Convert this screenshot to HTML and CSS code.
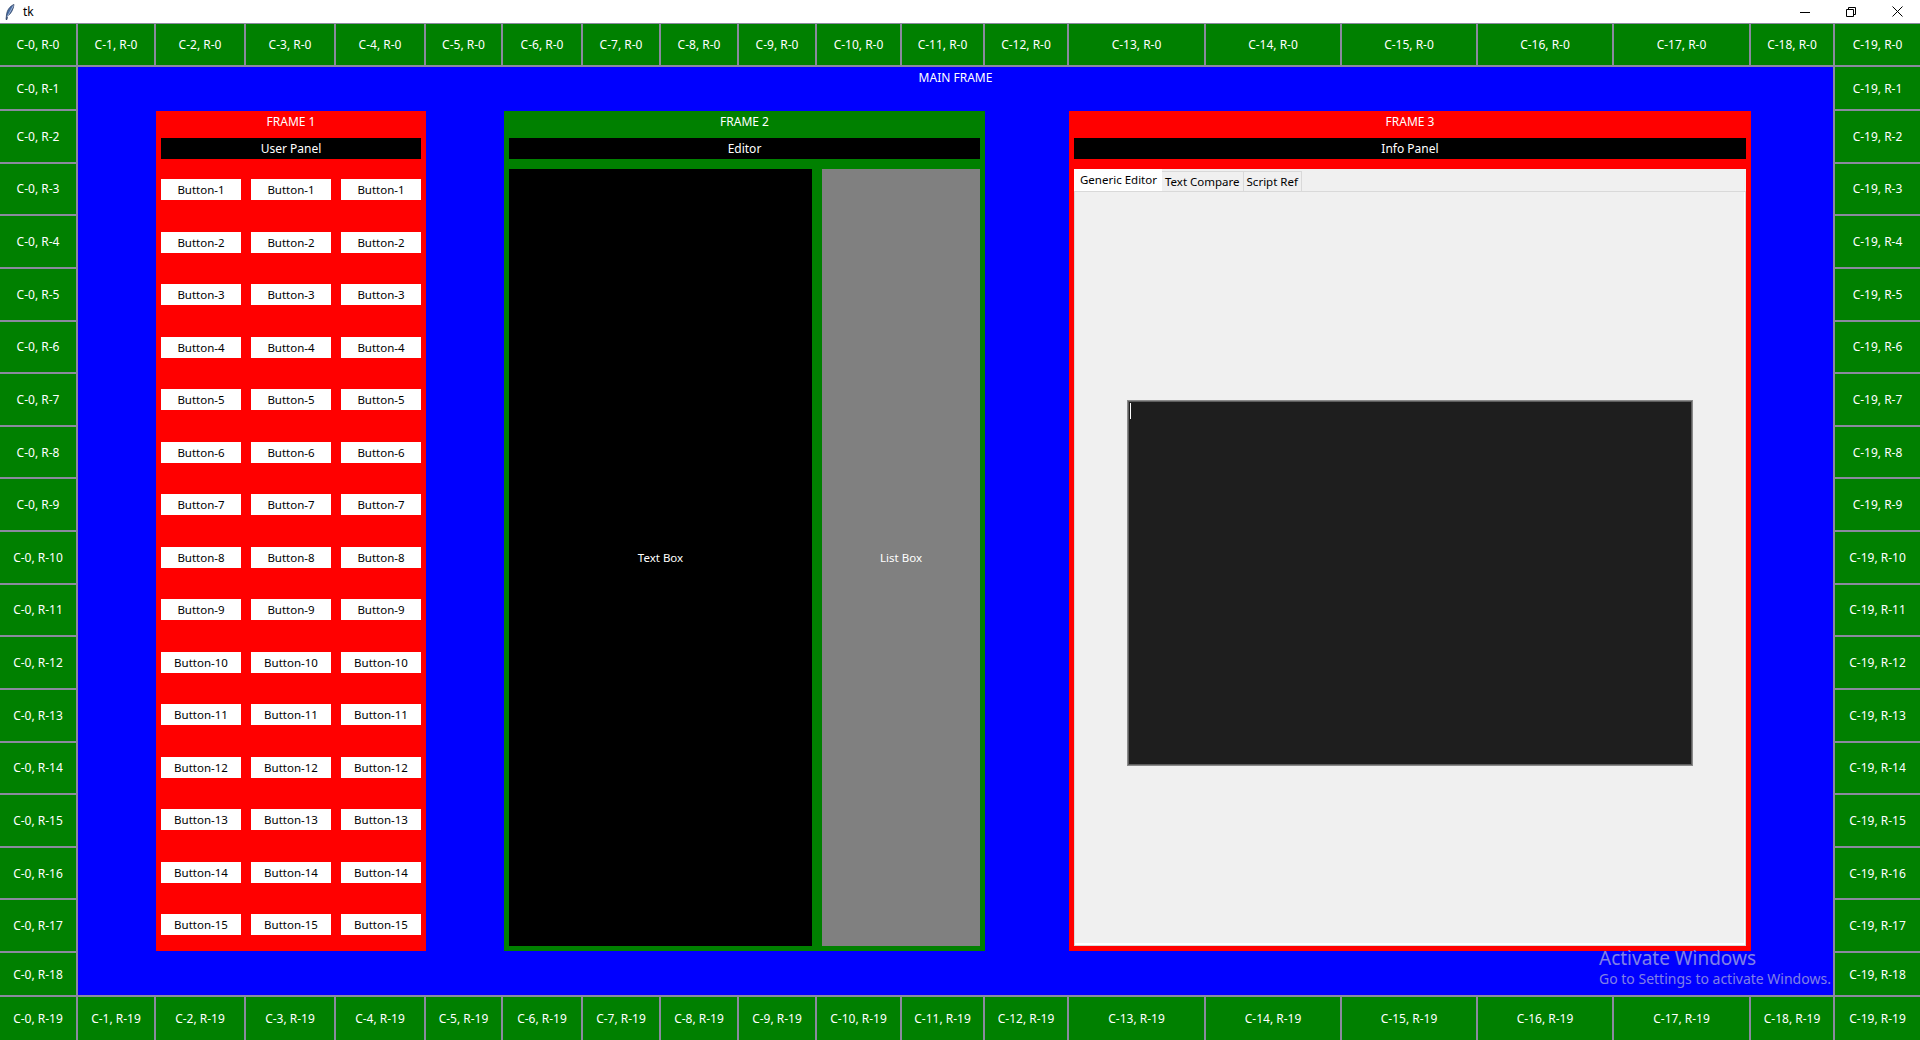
FILE: index.html
```html
<!DOCTYPE html>
<html lang="en">
<head>
<meta charset="utf-8">
<title>tk</title>
<link rel="stylesheet" href="styles.css">
</head>
<body>
<div class="titlebar">
  <svg class="app-icon" viewBox="0 0 10 16" width="10" height="16">
    <path d="M9 0.5 C5 2 2 6 1.5 11 L1 15.5 L2 15.5 L2.6 12 C6 10 8.5 5 9 0.5 Z" fill="#4a6fa5" stroke="#1d2f52" stroke-width="0.7"/>
    <path d="M8.5 1.5 L2.2 13" stroke="#dfe8f5" stroke-width="0.6"/>
  </svg>
  <span class="title">tk</span>
  <div class="win-controls">
    <div class="win-btn"><svg width="10" height="10" viewBox="0 0 10 10"><path d="M0 5.5 H10" stroke="#000" stroke-width="1"/></svg></div>
    <div class="win-btn"><svg width="10" height="10" viewBox="0 0 10 10"><path d="M0.5 2.5 H7.5 V9.5 H0.5 Z" fill="none" stroke="#000" stroke-width="1"/><path d="M2.5 2.5 V0.5 H9.5 V7.5 H7.5" fill="none" stroke="#000" stroke-width="1"/></svg></div>
    <div class="win-btn"><svg width="11" height="11" viewBox="0 0 11 11"><path d="M0.5 0.5 L10.5 10.5 M10.5 0.5 L0.5 10.5" stroke="#000" stroke-width="1"/></svg></div>
  </div>
</div>

<div class="grid">
  <div class="cell">C-0, R-0</div><div class="cell">C-1, R-0</div><div class="cell">C-2, R-0</div><div class="cell">C-3, R-0</div><div class="cell">C-4, R-0</div>
  <div class="cell">C-5, R-0</div><div class="cell">C-6, R-0</div><div class="cell">C-7, R-0</div><div class="cell">C-8, R-0</div><div class="cell">C-9, R-0</div>
  <div class="cell">C-10, R-0</div><div class="cell">C-11, R-0</div><div class="cell">C-12, R-0</div><div class="cell">C-13, R-0</div><div class="cell">C-14, R-0</div>
  <div class="cell">C-15, R-0</div><div class="cell">C-16, R-0</div><div class="cell">C-17, R-0</div><div class="cell">C-18, R-0</div><div class="cell">C-19, R-0</div>

  <div class="main-frame">
    <div class="main-label">MAIN FRAME</div>

    <div class="frame frame-red frame1">
      <div class="frame-title">FRAME 1</div>
      <div class="panel-bar">User Panel</div>
      <div class="button-grid">
        <div class="btn">Button-1</div><div class="btn">Button-1</div><div class="btn">Button-1</div>
        <div class="btn">Button-2</div><div class="btn">Button-2</div><div class="btn">Button-2</div>
        <div class="btn">Button-3</div><div class="btn">Button-3</div><div class="btn">Button-3</div>
        <div class="btn">Button-4</div><div class="btn">Button-4</div><div class="btn">Button-4</div>
        <div class="btn">Button-5</div><div class="btn">Button-5</div><div class="btn">Button-5</div>
        <div class="btn">Button-6</div><div class="btn">Button-6</div><div class="btn">Button-6</div>
        <div class="btn">Button-7</div><div class="btn">Button-7</div><div class="btn">Button-7</div>
        <div class="btn">Button-8</div><div class="btn">Button-8</div><div class="btn">Button-8</div>
        <div class="btn">Button-9</div><div class="btn">Button-9</div><div class="btn">Button-9</div>
        <div class="btn">Button-10</div><div class="btn">Button-10</div><div class="btn">Button-10</div>
        <div class="btn">Button-11</div><div class="btn">Button-11</div><div class="btn">Button-11</div>
        <div class="btn">Button-12</div><div class="btn">Button-12</div><div class="btn">Button-12</div>
        <div class="btn">Button-13</div><div class="btn">Button-13</div><div class="btn">Button-13</div>
        <div class="btn">Button-14</div><div class="btn">Button-14</div><div class="btn">Button-14</div>
        <div class="btn">Button-15</div><div class="btn">Button-15</div><div class="btn">Button-15</div>
      </div>
    </div>

    <div class="frame frame-green frame2">
      <div class="frame-title">FRAME 2</div>
      <div class="panel-bar">Editor</div>
      <div class="editor-body">
        <div class="text-box">Text Box</div>
        <div class="list-box">List Box</div>
      </div>
    </div>

    <div class="frame frame-red frame3">
      <div class="frame-title">FRAME 3</div>
      <div class="panel-bar">Info Panel</div>
      <div class="notebook">
        <div class="tabs">
          <div class="tab active">Generic Editor</div>
          <div class="tab">Text Compare</div>
          <div class="tab">Script Ref</div>
        </div>
        <div class="pane">
          <div class="dark-text"><span class="caret"></span></div>
        </div>
      </div>
    </div>
  </div>

  <div class="cell">C-0, R-1</div><div class="cell">C-19, R-1</div>
  <div class="cell">C-0, R-2</div><div class="cell">C-19, R-2</div>
  <div class="cell">C-0, R-3</div><div class="cell">C-19, R-3</div>
  <div class="cell">C-0, R-4</div><div class="cell">C-19, R-4</div>
  <div class="cell">C-0, R-5</div><div class="cell">C-19, R-5</div>
  <div class="cell">C-0, R-6</div><div class="cell">C-19, R-6</div>
  <div class="cell">C-0, R-7</div><div class="cell">C-19, R-7</div>
  <div class="cell">C-0, R-8</div><div class="cell">C-19, R-8</div>
  <div class="cell">C-0, R-9</div><div class="cell">C-19, R-9</div>
  <div class="cell">C-0, R-10</div><div class="cell">C-19, R-10</div>
  <div class="cell">C-0, R-11</div><div class="cell">C-19, R-11</div>
  <div class="cell">C-0, R-12</div><div class="cell">C-19, R-12</div>
  <div class="cell">C-0, R-13</div><div class="cell">C-19, R-13</div>
  <div class="cell">C-0, R-14</div><div class="cell">C-19, R-14</div>
  <div class="cell">C-0, R-15</div><div class="cell">C-19, R-15</div>
  <div class="cell">C-0, R-16</div><div class="cell">C-19, R-16</div>
  <div class="cell">C-0, R-17</div><div class="cell">C-19, R-17</div>
  <div class="cell">C-0, R-18</div><div class="cell">C-19, R-18</div>

  <div class="cell">C-0, R-19</div><div class="cell">C-1, R-19</div><div class="cell">C-2, R-19</div><div class="cell">C-3, R-19</div><div class="cell">C-4, R-19</div>
  <div class="cell">C-5, R-19</div><div class="cell">C-6, R-19</div><div class="cell">C-7, R-19</div><div class="cell">C-8, R-19</div><div class="cell">C-9, R-19</div>
  <div class="cell">C-10, R-19</div><div class="cell">C-11, R-19</div><div class="cell">C-12, R-19</div><div class="cell">C-13, R-19</div><div class="cell">C-14, R-19</div>
  <div class="cell">C-15, R-19</div><div class="cell">C-16, R-19</div><div class="cell">C-17, R-19</div><div class="cell">C-18, R-19</div><div class="cell">C-19, R-19</div>
</div>

<div class="watermark">
  <div class="wm-title">Activate Windows</div>
  <div class="wm-sub">Go to Settings to activate Windows.</div>
</div>
</body>
</html>
```

FILE: styles.css
```css
* { box-sizing: border-box; }

html, body {
  margin: 0;
  padding: 0;
}

body {
  width: 1920px;
  height: 1040px;
  overflow: hidden;
  position: relative;
  background: #ffffff;
  font-family: "Noto Sans", "Open Sans", "DejaVu Sans", sans-serif;
  font-size: 12px;
  color: #000;
}

/* ---------- title bar ---------- */
.titlebar {
  height: 23px;
  display: flex;
  align-items: center;
  background: #ffffff;
}

.app-icon {
  margin-left: 5px;
  flex: none;
}

.title {
  margin-left: 8px;
  font-size: 12px;
  color: #000;
}

.win-controls {
  margin-left: auto;
  display: flex;
  height: 100%;
}

.win-btn {
  width: 46px;
  height: 100%;
  display: flex;
  align-items: center;
  justify-content: center;
}

/* ---------- outer grid ---------- */
.grid {
  height: 1017px;
  display: grid;
  background: #8a8a9e;
  padding-top: 1px;
  gap: 2px;
  grid-template-columns: 76px 76px 88px 88px 88px 75px 78px 76px 76px 76px 83px 81px 82px 135px 134px 134px 134px 135px 82px 85px;
  grid-template-rows: 41px 42px repeat(16, 1fr) 42px 43px;
}

.cell {
  background: #008000;
  color: #ffffff;
  display: flex;
  align-items: center;
  justify-content: center;
  font-size: 12px;
  white-space: nowrap;
}

/* ---------- main frame ---------- */
.main-frame {
  grid-column: 2 / 20;
  grid-row: 2 / 20;
  background: #0000ff;
  display: grid;
  grid-template-columns: 78px 270px 78px 481px 84px 682px 1fr;
  grid-template-rows: 44px 840px 1fr;
}

.main-label {
  grid-column: 1 / -1;
  grid-row: 1;
  text-align: center;
  color: #ffffff;
  line-height: 22px;
  font-size: 12px;
}

.frame {
  grid-row: 2;
  display: flex;
  flex-direction: column;
  padding: 0 5px 5px;
  color: #ffffff;
}

.frame1 { grid-column: 2; }
.frame2 { grid-column: 4; }
.frame3 { grid-column: 6; }

.frame-red { background: #ff0000; }
.frame-green { background: #008000; }

.frame-title {
  height: 22px;
  line-height: 22px;
  text-align: center;
  margin-bottom: 5px;
  font-size: 12px;
}

.panel-bar {
  height: 21px;
  line-height: 21px;
  background: #000000;
  color: #ffffff;
  text-align: center;
  font-size: 12px;
}

/* ---------- frame 1 buttons ---------- */
.button-grid {
  display: grid;
  grid-template-columns: repeat(3, 80px);
  column-gap: 10px;
  grid-template-rows: repeat(15, 21px);
  row-gap: 31.5px;
  padding-top: 20px;
}

.btn {
  background: #ffffff;
  color: #000000;
  text-align: center;
  line-height: 21px;
  font-size: 11.5px;
}

/* ---------- frame 2 editor ---------- */
.editor-body {
  flex: 1;
  display: flex;
  gap: 10px;
  margin-top: 10px;
}

.text-box {
  width: 303px;
  background: #000000;
  color: #ffffff;
  display: flex;
  align-items: center;
  justify-content: center;
  font-size: 11.5px;
}

.list-box {
  flex: 1;
  background: #808080;
  color: #ffffff;
  display: flex;
  align-items: center;
  justify-content: center;
  font-size: 11.5px;
}

/* ---------- frame 3 notebook ---------- */
.notebook {
  flex: 1;
  margin-top: 10px;
  display: flex;
  flex-direction: column;
  background: #f0f0f0;
}

.tabs {
  height: 22px;
  display: flex;
  align-items: flex-end;
  background: #f0f0f0;
}

.tab {
  height: 20px;
  padding: 0 3px;
  background: #f0f0f0;
  border: 1px solid #d9d9d9;
  border-bottom: none;
  border-left: none;
  color: #000000;
  font-size: 11.5px;
  line-height: 19px;
  white-space: nowrap;
}

.tab.active {
  height: 22px;
  padding: 0 5px 0 6px;
  background: #ffffff;
  border: none;
  line-height: 22px;
}

.pane {
  flex: 1;
  display: flex;
  justify-content: center;
  align-items: flex-start;
  background: #f0f0f0;
  border: 1px solid #d9d9d9;
  box-shadow: inset -1px -2px 0 #ffffff;
  padding-top: 208px;
}

.dark-text {
  width: 566px;
  height: 366px;
  background: #1e1e1e;
  border: 1px solid #8a8a8a;
  box-shadow: inset 0 0 0 1px #5e5e5e;
  padding: 2px 0 0 2px;
}

.caret {
  display: block;
  width: 1px;
  height: 16px;
  background: #ffffff;
}

/* ---------- OS watermark overlay ---------- */
.watermark {
  position: absolute;
  left: 1599px;
  top: 949px;
  color: #8080e6;
  white-space: nowrap;
}

.wm-title {
  font-size: 19px;
  line-height: 19px;
}

.wm-sub {
  margin-top: 4px;
  font-size: 14px;
  line-height: 14px;
}
```
